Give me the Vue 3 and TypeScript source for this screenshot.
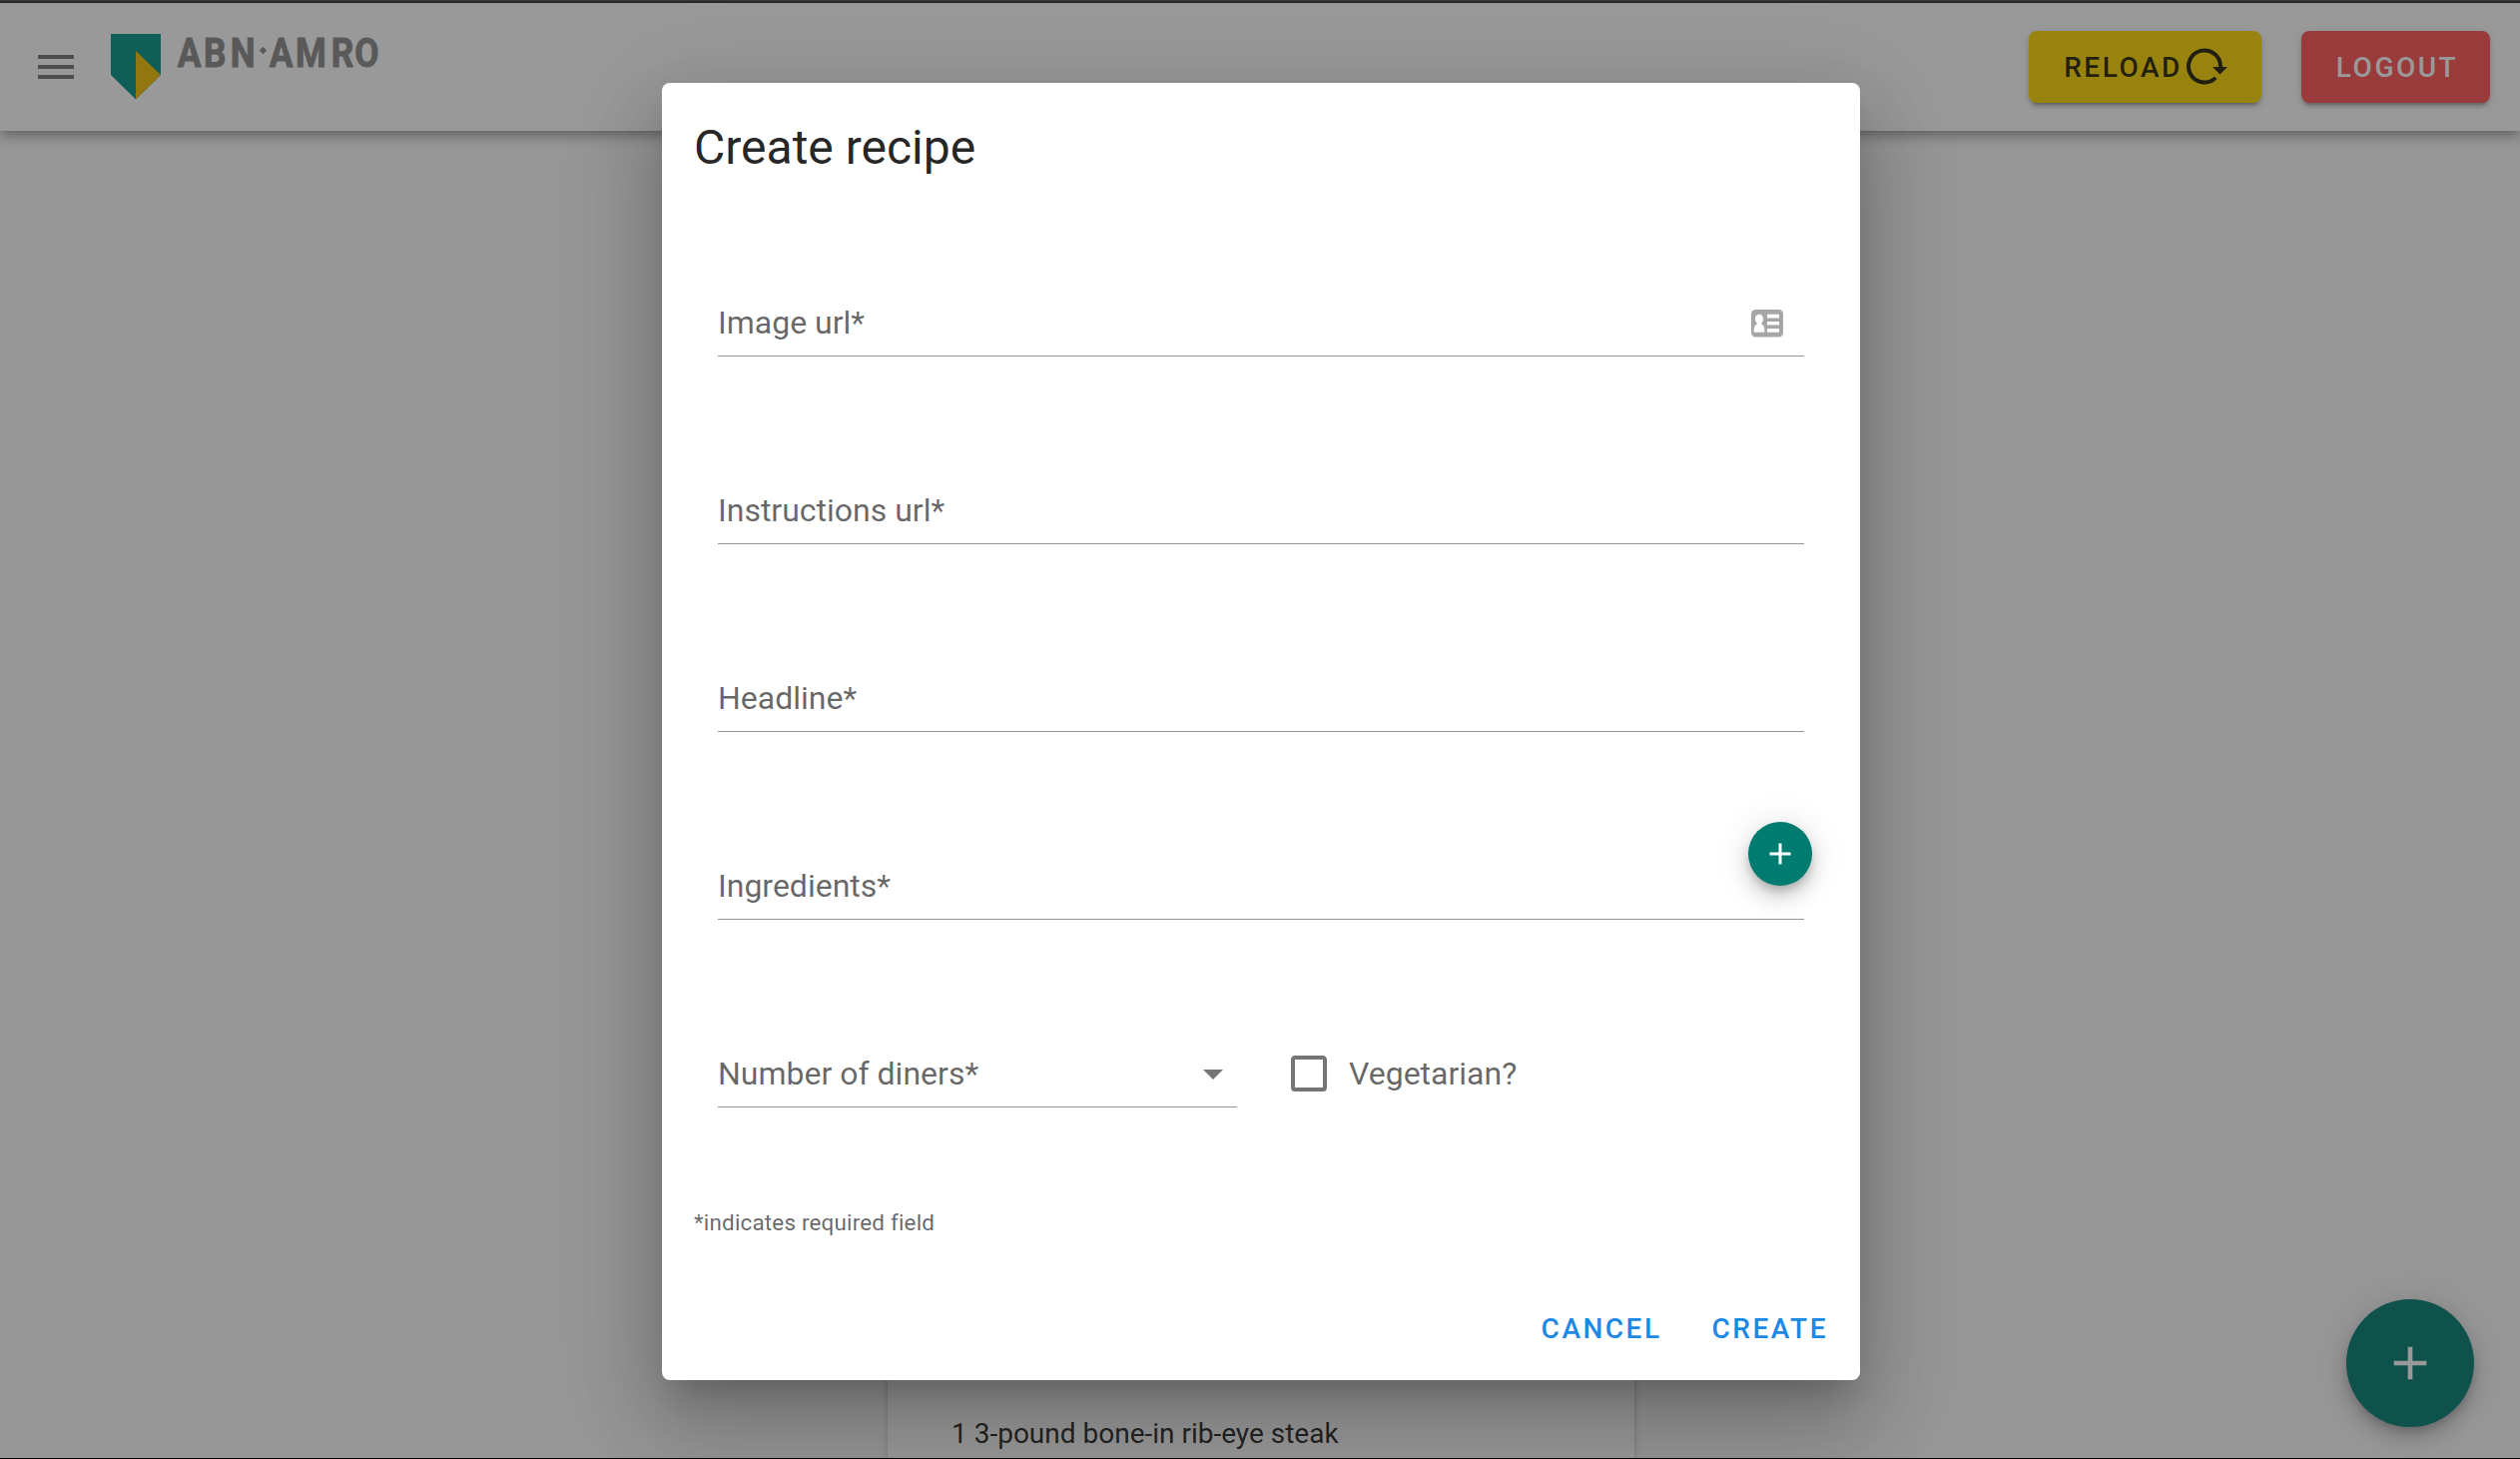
<script setup lang="ts">
interface TextField {
  label: string
  adornment?: 'contact' | 'add'
}

const fields: TextField[] = [
  { label: 'Image url*', adornment: 'contact' },
  { label: 'Instructions url*' },
  { label: 'Headline*' },
  { label: 'Ingredients*', adornment: 'add' },
]
</script>

<template>
  <div class="app">
    <div class="app-content">
      <header class="toolbar">
        <svg class="menu-icon" viewBox="0 0 24 24"><path d="M3,6H21V8H3V6M3,11H21V13H3V11M3,16H21V18H3V16Z" /></svg>
        <svg class="logo" viewBox="0 -12 280 90">
          <path d="M0 0H50V41L25 65.5L0 41Z" fill="#009286" />
          <path d="M25 17L50 41L25 65.5Z" fill="#f3c000" />
          <g class="logo-text" transform="translate(0 33) scale(.88 1)">
            <text x="75.8 105.6 136.2">ABN</text>
            <text x="180.4 210.1 251 277.6">AMRO</text>
          </g>
          <path d="M152.5 12.8L156.2 16.5L152.5 20.2L148.8 16.5Z" fill="#898989" />
        </svg>
        <div class="spacer"></div>
        <button class="btn reload">
          <span>Reload</span>
          <svg class="reload-icon" viewBox="0 0 46 38">
            <path d="M30.2 29.9A16 16 0 1 1 35 19" fill="none" stroke="currentColor" stroke-width="4" />
            <path d="M27 19H42L34.5 26.5Z" fill="currentColor" />
          </svg>
        </button>
        <button class="btn logout">Logout</button>
      </header>
      <main class="main">
        <article class="recipe">1 3-pound bone-in rib-eye steak</article>
      </main>
      <button class="fab fab-large">
        <svg viewBox="0 0 24 24"><path d="M19,13H13V19H11V13H5V11H11V5H13V11H19V13Z" /></svg>
      </button>
    </div>

    <div class="overlay">
      <section class="dialog">
        <h1 class="title">Create recipe</h1>
        <form class="form">
          <div v-for="field in fields" :key="field.label" class="field">
            <label>{{ field.label }}</label>
            <svg v-if="field.adornment === 'contact'" class="contact-icon" viewBox="0 0 32 28">
              <rect width="32" height="27.5" rx="4.5" fill="#a6a6a6" />
              <path
                d="M8 4.8C10.4 4.8 12 6.5 12 9C12 11 11.3 12.6 10.3 13.5V14.8C12.4 15.6 13.3 17.5 13.3 20V22.7H2.7V20C2.7 17.5 3.6 15.6 5.7 14.8V13.5C4.7 12.6 4 11 4 9C4 6.5 5.6 4.8 8 4.8ZM16 4.8H28V8.6H16ZM16 12H28V15.5H16ZM16 19H28V22.7H16Z"
                fill="#fff"
              />
            </svg>
            <button v-if="field.adornment === 'add'" type="button" class="fab fab-small">
              <svg viewBox="0 0 24 24"><path d="M19,13H13V19H11V13H5V11H11V5H13V11H19V13Z" /></svg>
            </button>
          </div>
          <div class="row">
            <div class="field select">
              <label>Number of diners*</label>
              <svg class="caret" viewBox="0 0 24 24"><path d="M7,10L12,15L17,10H7Z" /></svg>
            </div>
            <label class="checkbox">
              <svg viewBox="0 0 24 24">
                <path d="M19,3H5C3.89,3 3,3.89 3,5V19A2,2 0 0,0 5,21H19A2,2 0 0,0 21,19V5C21,3.89 20.1,3 19,3M19,5V19H5V5H19Z" />
              </svg>
              <span>Vegetarian?</span>
            </label>
          </div>
        </form>
        <small class="hint">*indicates required field</small>
        <footer class="actions">
          <button class="text-btn">Cancel</button>
          <button class="text-btn">Create</button>
        </footer>
      </section>
    </div>
    <div class="window-edge"></div>
  </div>
</template>

<style>
body {
  overflow: hidden;
}
</style>

<style scoped>
.app {
  position: relative;
  width: 100%;
  height: 1461px;
  overflow: hidden;
  background: #fafafa;
  color: rgba(0, 0, 0, 0.87);
  font-family: Roboto, sans-serif;
  font-size: 32px;
  box-sizing: border-box;
}
.app *,
.app *::before {
  box-sizing: border-box;
}
button {
  border: 0;
  padding: 0;
  background: none;
  font-family: inherit;
}
svg {
  display: block;
  flex: none;
}
.app-content {
  display: flex;
  flex-direction: column;
  height: 100%;
}
.toolbar {
  display: flex;
  align-items: center;
  height: 131px;
  flex: none;
  padding: 3px 30px 0 32px;
  background: #fff;
  box-shadow: 0 4px 8px -2px rgba(0, 0, 0, 0.2), 0 8px 10px rgba(0, 0, 0, 0.14), 0 2px 20px rgba(0, 0, 0, 0.12);
}
.menu-icon {
  width: 48px;
  height: 48px;
  fill: rgba(0, 0, 0, 0.54);
}
.logo {
  width: 280px;
  height: 90px;
  margin-left: 31px;
}
.logo-text {
  fill: #898989;
  stroke: #898989;
  stroke-width: 0.9px;
  font-size: 40px;
  font-weight: 700;
}
.spacer {
  flex: 1;
}
.btn {
  display: flex;
  align-items: center;
  justify-content: center;
  height: 72px;
  border-radius: 8px;
  font-size: 28px;
  font-weight: 500;
  letter-spacing: 0.0892857143em;
  text-transform: uppercase;
  box-shadow: 0 6px 2px -4px rgba(0, 0, 0, 0.2), 0 4px 4px rgba(0, 0, 0, 0.14), 0 2px 10px rgba(0, 0, 0, 0.12);
}
.reload {
  gap: 3px;
  width: 233px;
  margin-right: 40px;
  padding-left: 5px;
  background: #ffd600;
  color: rgba(0, 0, 0, 0.87);
}
.reload-icon {
  width: 46px;
  height: 38px;
}
.logout {
  width: 189px;
  padding-left: 3px;
  background: #ff5252;
  color: #fff;
}
.main {
  display: flex;
  flex: 1;
  padding-left: 889px;
}
.recipe {
  display: flex;
  align-items: flex-end;
  width: 748px;
  padding: 0 64px 8px;
  background: #fff;
  font-size: 28px;
  line-height: 34px;
  white-space: nowrap;
  box-shadow: 0 6px 2px -4px rgba(0, 0, 0, 0.2), 0 4px 4px rgba(0, 0, 0, 0.14), 0 2px 10px rgba(0, 0, 0, 0.12);
}
.fab {
  position: absolute;
  display: flex;
  align-items: center;
  justify-content: center;
  border-radius: 50%;
  background: #007b70;
  fill: #fff;
  box-shadow: 0 6px 10px -2px rgba(0, 0, 0, 0.2), 0 12px 20px rgba(0, 0, 0, 0.14), 0 2px 36px rgba(0, 0, 0, 0.12);
}
.fab-large {
  right: 46px;
  bottom: 32px;
  width: 128px;
  height: 128px;
}
.fab-large svg {
  width: 56px;
  height: 56px;
}
.fab-small {
  right: -8px;
  bottom: 33px;
  width: 64px;
  height: 64px;
}
.fab-small svg {
  width: 36px;
  height: 36px;
}
.overlay {
  position: absolute;
  inset: 0;
  display: flex;
  align-items: flex-start;
  padding: 83px 0 0 663px;
  background: rgba(33, 33, 33, 0.46);
}
.dialog {
  display: flex;
  flex-direction: column;
  width: 1200px;
  height: 1299px;
  padding: 33px 32px 16px;
  border-radius: 8px;
  background: #fff;
  box-shadow: 0 22px 30px -14px rgba(0, 0, 0, 0.2), 0 48px 76px 6px rgba(0, 0, 0, 0.14), 0 18px 92px 16px rgba(0, 0, 0, 0.12);
}
.title {
  margin: 0;
  font-size: 48px;
  font-weight: 400;
  line-height: 64px;
}
.form {
  display: flex;
  flex-direction: column;
  gap: 124px;
  margin-top: 113px;
  padding: 0 24px;
}
.field {
  position: relative;
  display: flex;
  align-items: center;
  justify-content: space-between;
  height: 64px;
  padding-bottom: 3px;
  border-bottom: 1px solid #949494;
  color: rgba(0, 0, 0, 0.6);
}
.contact-icon {
  width: 32px;
  height: 28px;
  margin: 2px 21px 0 0;
}
.row {
  display: flex;
  gap: 48px;
}
.select {
  width: 520px;
}
.caret {
  width: 48px;
  height: 48px;
  fill: rgba(0, 0, 0, 0.54);
}
.checkbox {
  display: flex;
  align-items: center;
  gap: 16px;
  height: 60px;
  color: rgba(0, 0, 0, 0.6);
}
.checkbox svg {
  width: 48px;
  height: 48px;
  fill: rgba(0, 0, 0, 0.54);
}
.hint {
  margin-top: 94px;
  color: rgba(0, 0, 0, 0.6);
  font-size: 22.4px;
  line-height: 42px;
  letter-spacing: 0.2px;
}
.actions {
  display: flex;
  justify-content: flex-end;
  gap: 18px;
  margin-top: auto;
  margin-right: -16px;
}
.text-btn {
  height: 72px;
  padding: 0 16px;
  color: #1e88e5;
  font-size: 28px;
  font-weight: 500;
  letter-spacing: 0.0892857143em;
  text-transform: uppercase;
}
.window-edge {
  position: absolute;
  inset: 0;
  border-top: 1px solid #3a3c3c;
  border-bottom: 1px solid #000;
  box-shadow: inset 0 2px #262828;
  pointer-events: none;
}
</style>
